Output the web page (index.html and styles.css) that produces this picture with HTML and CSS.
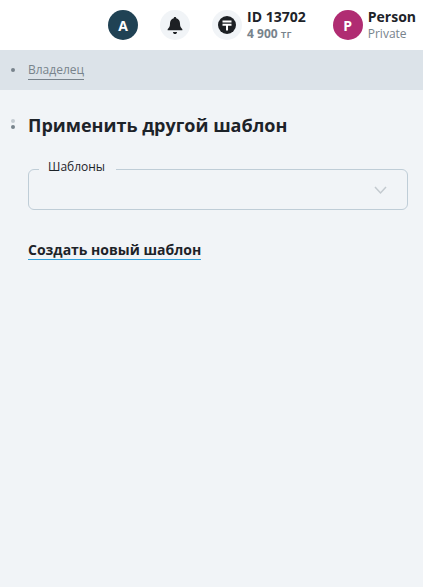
FILE: index.html
```html
<!DOCTYPE html>
<html lang="ru">
<head>
<meta charset="utf-8">
<title>Шаблоны</title>
<link rel="stylesheet" href="styles.css">
</head>
<body>
<header class="topbar">
  <div class="avatar avatar-dark">A</div>
  <div class="round-btn bell">
    <svg width="16" height="17" viewBox="1.5 1 13 15"><path fill="#1d2024" d="M8 1c.7 0 1.100.5 1.100 1.100 2.300.5 3.300 2.400 3.300 4.600 0 2.600.8 3.700 2.100 5v1.100h-13v-1.100c1.300-1.300 2.100-2.400 2.100-5 0-2.200 1-4.100 3.300-4.600C6.900 1.500 7.300 1 8 1z"/><path fill="#1d2024" d="M6.200 14.200h3.600c0 1-.8 1.800-1.800 1.800s-1.800-.8-1.800-1.800z"/></svg>
  </div>
  <div class="round-btn tenge">
    <svg width="18" height="18" viewBox="0 0 18 18"><circle cx="9" cy="9" r="9" fill="#1d2024"/><path fill="none" stroke="#fff" stroke-width="2" d="M4.500 5.500h9M4.500 8.800h9M9 8.800v5.700"/></svg>
  </div>
  <div class="info balance">
    <div class="info-main">ID 13702</div>
    <div class="info-sub info-sub-bold">4 900 <span class="unit">тг</span></div>
  </div>
  <div class="avatar avatar-pink">P</div>
  <div class="info person">
    <div class="info-main">Person</div>
    <div class="info-sub">Private</div>
  </div>
</header>
<nav class="crumbs">
  <span class="dot"></span>
  <a class="crumb-link">Владелец</a>
</nav>
<main class="content">
  <div class="title-row">
    <span class="handle"><i class="handle-light"></i><i></i></span>
    <h1 class="title">Применить другой шаблон</h1>
  </div>
  <div class="select">
    <span class="select-label">Шаблоны</span>
    <svg class="chevron" width="14" height="9" viewBox="0 0 14 9"><path fill="none" stroke="#c3cacf" stroke-width="1.500" d="M2 1l5.500 6L13 1"/></svg>
  </div>
  <a class="create-link">Создать новый шаблон</a>
</main>
</body>
</html>
```
FILE: styles.css
```css
* { box-sizing: border-box; }
html, body { height: 100%; }
body {
  margin: 0;
  background: #f1f4f7;
  font-family: "Open Sans", "Noto Sans", sans-serif;
  color: #1d2329;
  overflow: hidden;
}
.topbar {
  height: 50px;
  background: #fff;
  display: flex;
  align-items: center;
  justify-content: flex-end;
  padding-right: 7px;
}
.avatar {
  width: 30px;
  height: 30px;
  border-radius: 50%;
  color: #fff;
  font-size: 14px;
  font-weight: 700;
  display: flex;
  align-items: center;
  justify-content: center;
  flex: none;
}
.avatar-dark { background: #204254; margin-right: 22px; }
.avatar-pink { background: #b02c72; margin-right: 5px; }
.round-btn {
  width: 30px;
  height: 30px;
  border-radius: 50%;
  background: #f1f4f7;
  display: flex;
  align-items: center;
  justify-content: center;
  flex: none;
}
.bell { margin-right: 22px; }
.tenge { margin-right: 5px; }
.info { display: flex; flex-direction: column; padding-top: 1px; }
.balance { margin-right: 27px; }
.info-main { font-size: 14px; font-weight: 700; line-height: 16px; color: #1d2329; }
.info-sub { font-size: 12px; line-height: 16px; margin-top: 1px; color: #78838c; }
.info-sub-bold { font-weight: 700; }
.unit { font-weight: 600; font-size: 11px; }
.crumbs {
  height: 40px;
  background: #dce3e9;
  display: flex;
  align-items: center;
  padding-left: 11px;
}
.dot {
  width: 4px;
  height: 4px;
  border-radius: 50%;
  background: #78838c;
  margin-right: 13px;
}
.crumb-link {
  font-size: 12px;
  line-height: 16px;
  color: #78838c;
  border-bottom: 1px solid #78838c;
  padding-bottom: 1px;
  margin-top: 2px;
}
.content { padding: 20px 15px 0 28px; }
.title-row { position: relative; }
.handle {
  position: absolute;
  left: -17px;
  top: 9px;
  display: flex;
  flex-direction: column;
  gap: 2px;
}
.handle i {
  display: block;
  width: 4px;
  height: 4px;
  border-radius: 50%;
  background: #78838c;
}
.handle .handle-light { background: #c4cbd1; }
.title {
  margin: 0;
  font-size: 18px;
  font-weight: 700;
  line-height: 30px;
  color: #1d2329;
}
.select {
  margin: 29px 0 0;
  height: 41px;
  border: 1px solid #bfcdd7;
  border-radius: 6px;
  position: relative;
}
.select-label {
  position: absolute;
  left: 10px;
  top: -11px;
  padding: 0 11px 0 9px;
  background: linear-gradient(#f1f4f7, #f1f4f7) no-repeat center 9px / 100% 4px;
  font-size: 12px;
  line-height: 16px;
  color: #1d2329;
}
.chevron { position: absolute; right: 20px; top: 16px; }
.create-link {
  display: inline-block;
  margin-top: 30px;
  font-size: 14px;
  font-weight: 700;
  line-height: 19px;
  color: #1d2329;
  border-bottom: 1px solid #2e9fdb;
}
```
